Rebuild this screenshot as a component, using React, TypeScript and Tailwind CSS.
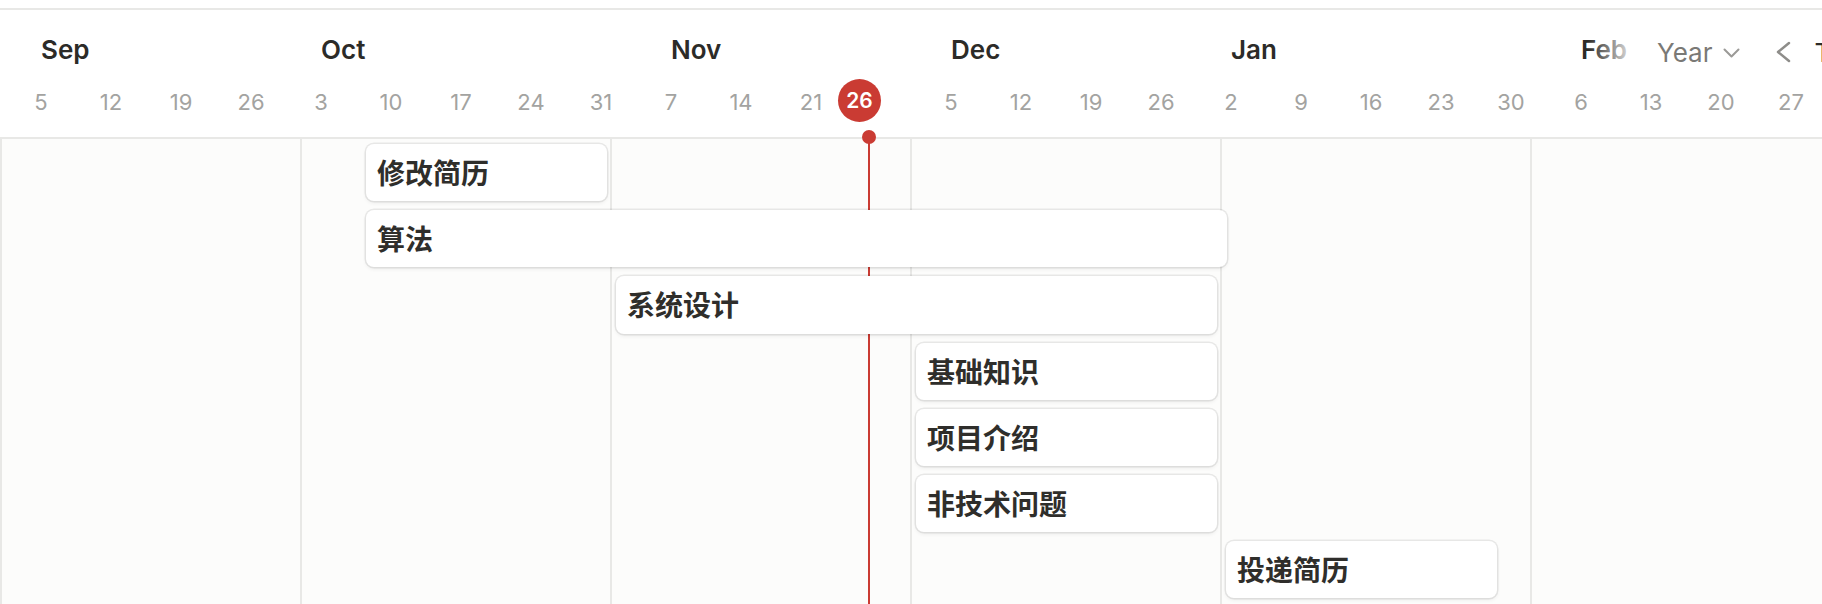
import React from "react";

const weeks = [
  "5", "12", "19", "26",
  "3", "10", "17", "24", "31",
  "7", "14", "21", "",
  "5", "12", "19", "26",
  "2", "9", "16", "23", "30",
  "6", "13", "20", "27",
];

const months = [
  { name: "Sep", w: 280 },
  { name: "Oct", w: 350 },
  { name: "Nov", w: 280 },
  { name: "Dec", w: 280 },
  { name: "Jan", w: 350 },
  { name: "Feb", w: 200 },
];

const columns = [300, 310, 300, 310, 310, 300];

// day index from Sep 1 (inclusive start, inclusive end)
const bars = [
  { title: "修改简历", start: 36, end: 60 },
  { title: "算法", start: 36, end: 122 },
  { title: "系统设计", start: 61, end: 121 },
  { title: "基础知识", start: 91, end: 121 },
  { title: "项目介绍", start: 91, end: 121 },
  { title: "非技术问题", start: 91, end: 121 },
  { title: "投递简历", start: 122, end: 149 },
];

export default function App() {
  return (
    <div className="relative w-[1822px] h-[604px] overflow-hidden bg-white font-['Inter','Noto_Sans_CJK_SC',sans-serif]">
      <div className="h-[8px]" />
      {/* header */}
      <div className="relative h-[129px] border-t-2 border-[#e8e8e6]">
        <div className="mt-[24px] flex h-[32px] pl-[41px] text-[26px] leading-[32px] font-semibold text-[#2c2b28] whitespace-nowrap">
          {months.map((m) => (
            <div key={m.name} className="shrink-0" style={{ width: m.w }}>
              {m.name}
            </div>
          ))}
        </div>
        <div className="mt-[22px] flex h-[28px] pl-[6px] text-[22px] leading-[28px] text-[#a3a3a1]">
          {weeks.map((d, i) => (
            <div key={i} className="w-[70px] shrink-0 text-center">
              {d}
            </div>
          ))}
        </div>
        {/* today badge */}
        <div className="absolute left-[838px] top-[69px] flex h-[43px] w-[43px] items-center justify-center rounded-full bg-[#ca3b33] text-[21px] font-semibold text-white">
          26
        </div>
        {/* controls overlay */}
        <div className="absolute left-[1588px] top-[16px] flex h-[52px] items-center">
          <div className="h-full w-[50px] bg-gradient-to-r from-white/0 to-white" />
          <div className="flex h-full items-center bg-white pl-[19px] pr-[40px] text-[26px] whitespace-nowrap">
            <span className="text-[#7a7976]">Year</span>
            <svg width="17" height="11" viewBox="0 0 17 11" className="ml-[11px] mt-[2px]">
              <polyline points="1.5,1.5 8.5,8.5 15.5,1.5" fill="none" stroke="#9b9a97" strokeWidth="2" strokeLinecap="round" strokeLinejoin="round" />
            </svg>
            <svg width="18" height="22" viewBox="0 0 18 22" className="ml-[34px]">
              <polyline points="15,2 4,11 15,20" fill="none" stroke="#8e8d8a" strokeWidth="2.5" strokeLinecap="round" strokeLinejoin="round" />
            </svg>
            <span className="ml-[22px] text-[#2c2b28]">Today</span>
          </div>
        </div>
      </div>
      {/* body */}
      <div className="grid h-[467px] border-t-2 border-[#e8e8e6] bg-[#fcfcfb]">
        <div className="flex h-full [grid-area:1/1]">
          {columns.map((w, i) => (
            <div key={i} className="h-full shrink-0 border-l-2 border-[#e8e8e6]" style={{ width: w }} />
          ))}
        </div>
        <div className="flex h-full [grid-area:1/1]">
          <div className="ml-[868px] h-full w-[2px] bg-[#ca3b33]" />
        </div>
        <div className="flex flex-col gap-[9px] pt-[5px] [grid-area:1/1]">
          {bars.map((b) => {
            const left = b.start * 10 + 1 + 5;
            const right = (b.end + 1) * 10 + 1 - 4;
            return (
              <div
                key={b.title}
                className="flex h-[57.2px] shrink-0 items-center rounded-[8px] bg-white pl-[11px] pt-[3px] text-[28px] font-semibold text-[#2f2e2b] shadow-[0_0_0_1.5px_rgba(15,15,15,0.08),0_2px_4px_rgba(15,15,15,0.07)] whitespace-nowrap"
                style={{ marginLeft: left, width: right - left }}
              >
                {b.title}
              </div>
            );
          })}
        </div>
      </div>
      {/* today dot */}
      <div className="absolute left-[862px] top-[130px] h-[14px] w-[14px] rounded-full bg-[#ca3b33]" />
    </div>
  );
}
